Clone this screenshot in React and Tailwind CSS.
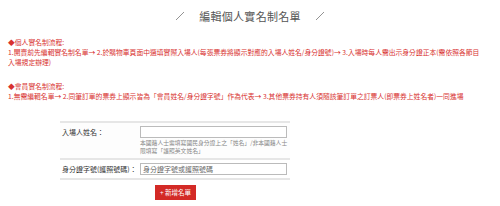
import React from "react";

const RED = "text-[#d8312f]";

function Slash() {
  return (
    <svg width="10" height="10" viewBox="0 0 10 10" className="shrink-0">
      <line x1="1" y1="9" x2="9" y2="1" stroke="#777" strokeWidth="0.8" />
    </svg>
  );
}

export default function App() {
  return (
    <div
      className="w-[500px] h-[206px] bg-white overflow-hidden"
      style={{ fontFamily: '"Noto Sans CJK TC", "Noto Sans", sans-serif' }}
    >
      {/* 標題 */}
      <div className="flex items-center justify-center gap-[10px] pt-[9px] h-[22px]">
        <Slash />
        <span className="text-[11px] leading-[12px] text-[#555] tracking-[0.3px] px-[4px]">編輯個人實名制名單</span>
        <Slash />
      </div>

      {/* 流程說明 */}
      <div className={`px-[8px] pt-[15px] text-[6.8px] leading-[10px] whitespace-nowrap ${RED}`}>
        <div>◆個人實名制流程:</div>
        <div>
          1.開賣前先編輯實名制名單→ 2.於購物車頁面中選填實際入場人(每張票券將顯示對應的入場人姓名/身分證號)→ 3.入場時每人需出示身分證正本(需依照各節目
        </div>
        <div>入場規定辦理)</div>
        <div className="mt-[14px]">◆會員實名制流程:</div>
        <div>
          1.無需編輯名單→ 2.同筆訂單的票券上顯示皆為「會員姓名/身分證字號」作為代表→ 3.其他票券持有人須隨該筆訂單之訂票人(即票券上姓名者)一同進場
        </div>
      </div>

      {/* 表單 */}
      <div className="ml-[60px] mt-[20px] w-[230px]">
        <div className="border-t-2 border-[#e6e6e6]">
          <div className="flex pt-[3px] pb-[4px] bg-[#fdfdfd]">
            <div className="w-[80px] pl-[2px] pt-[2px] text-[7px] leading-[9px] text-[#333]">入場人姓名：</div>
            <div className="w-[147px]">
              <input className="block w-full h-[12px] border border-[#bbb] bg-white outline-none" />
              <div className="mt-[1px] text-[5.8px] leading-[7.5px] text-[#888] whitespace-nowrap">
                本國籍人士需填寫國民身分證上之「姓名」/非本國籍人士
                <br />
                限填寫「護照英文姓名」
              </div>
            </div>
          </div>
        </div>
        <div className="border-t-2 border-b-2 border-[#e6e6e6]">
          <div className="flex items-center py-[3px]">
            <div className="w-[80px] pl-[2px] text-[7px] leading-[9px] text-[#333]">身分證字號(護照號碼)：</div>
            <input
              placeholder="身分證字號或護照號碼"
              className="block w-[147px] h-[12px] border border-[#bbb] bg-white px-[2px] text-[7px] placeholder:text-[#666] outline-none"
            />
          </div>
        </div>
        <div className="pl-[95px] pt-[5px]">
          <button className="block w-[41px] h-[15px] bg-[#d32a26] text-white text-[6.5px] leading-[15px] text-center">
            + 新增名單
          </button>
        </div>
      </div>
    </div>
  );
}
